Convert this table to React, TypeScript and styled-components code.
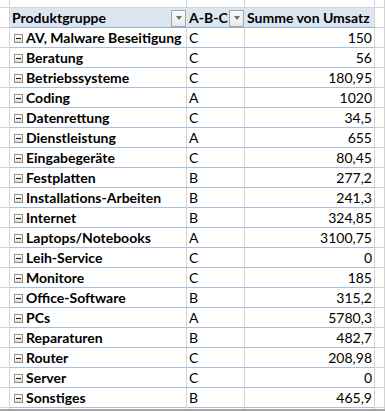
import { Fragment } from "react";
import styled, { createGlobalStyle } from "styled-components";

const GlobalStyle = createGlobalStyle`
    html, body {
        margin: 0;
        padding: 0;
        background: #ffffff;
    }
`;

type Row = { name: string; abc: string; sum: string };

const rows: Row[] = [
    { name: "AV, Malware Beseitigung", abc: "C", sum: "150" },
    { name: "Beratung", abc: "C", sum: "56" },
    { name: "Betriebssysteme", abc: "C", sum: "180,95" },
    { name: "Coding", abc: "A", sum: "1020" },
    { name: "Datenrettung", abc: "C", sum: "34,5" },
    { name: "Dienstleistung", abc: "A", sum: "655" },
    { name: "Eingabegeräte", abc: "C", sum: "80,45" },
    { name: "Festplatten", abc: "B", sum: "277,2" },
    { name: "Installations-Arbeiten", abc: "B", sum: "241,3" },
    { name: "Internet", abc: "B", sum: "324,85" },
    { name: "Laptops/Notebooks", abc: "A", sum: "3100,75" },
    { name: "Leih-Service", abc: "C", sum: "0" },
    { name: "Monitore", abc: "C", sum: "185" },
    { name: "Office-Software", abc: "B", sum: "315,2" },
    { name: "PCs", abc: "A", sum: "5780,3" },
    { name: "Reparaturen", abc: "B", sum: "482,7" },
    { name: "Router", abc: "C", sum: "208,98" },
    { name: "Server", abc: "C", sum: "0" },
    { name: "Sonstiges", abc: "B", sum: "465,9" },
];

const Sheet = styled.div`
    display: grid;
    grid-template-columns: 10px 177px 58px 130px 1fr;
    grid-template-rows: 8px 20px repeat(19, 20px) 1px;
    width: 385px;
    height: 411px;
    box-sizing: border-box;
    border-bottom: 2px solid #a3a3a3;
    background: #ffffff;
    font-family: Lato, "Liberation Sans", sans-serif;
    font-size: 14px;
    color: #000000;
    overflow: hidden;
`;

const GridCell = styled.div<{ $noBottom?: boolean }>`
    box-sizing: border-box;
    border-right: 1px solid #d4d4d4;
    border-bottom: ${p => (p.$noBottom ? "none" : "1px solid #d4d4d4")};
`;

const HeaderCell = styled.div<{ $last?: boolean }>`
    box-sizing: border-box;
    display: flex;
    align-items: center;
    justify-content: space-between;
    padding-left: 2px;
    background: #dce6f1;
    border-bottom: 1px solid #95b3d7;
    border-right: 1px solid ${p => (p.$last ? "#d4d4d4" : "#dce6f1")};
    font-weight: 700;
    white-space: nowrap;
`;

const FilterButton = styled.span`
    box-sizing: border-box;
    width: 15px;
    height: 17px;
    margin-top: 1px;
    display: flex;
    align-items: center;
    justify-content: center;
    border: 1px solid #a5a5a5;
    background: linear-gradient(#fbfbfb, #e9e9e9);

    &::after {
        content: "";
        border-left: 3.5px solid transparent;
        border-right: 3.5px solid transparent;
        border-top: 4px solid #6d6d6d;
    }
`;

const DataCell = styled.div<{ $align?: "left" | "right"; $bold?: boolean }>`
    box-sizing: border-box;
    display: flex;
    align-items: center;
    justify-content: ${p => (p.$align === "right" ? "flex-end" : "flex-start")};
    padding: ${p => (p.$align === "right" ? "0 2px 0 0" : "0 0 0 2px")};
    border-right: 1px solid #d4d4d4;
    border-bottom: 1px solid #a7bfde;
    font-weight: ${p => (p.$bold ? 700 : 400)};
    white-space: nowrap;
    overflow: hidden;
`;

const Collapse = styled.span`
    box-sizing: border-box;
    flex: none;
    width: 9px;
    height: 9px;
    margin: 1px 3px 0 2px;
    display: flex;
    align-items: center;
    justify-content: center;
    border: 1px solid #8e8e8e;
    background: linear-gradient(#ffffff, #dedede);

    &::after {
        content: "";
        width: 5px;
        height: 1px;
        background: #1a1a1a;
    }
`;

export default function App() {

    return <>
        <GlobalStyle />
        <Sheet>
            <GridCell />
            <GridCell />
            <GridCell />
            <GridCell />
            <GridCell />

            <GridCell />
            <HeaderCell>
                Produktgruppe
                <FilterButton />
            </HeaderCell>
            <HeaderCell>
                A-B-C
                <FilterButton />
            </HeaderCell>
            <HeaderCell $last>Summe von Umsatz</HeaderCell>
            <GridCell />

            {rows.map(row => <Fragment key={row.name}>
                <GridCell />
                <DataCell $bold>
                    <Collapse />
                    {row.name}
                </DataCell>
                <DataCell>{row.abc}</DataCell>
                <DataCell $align="right">{row.sum}</DataCell>
                <GridCell />
            </Fragment>)}

            <GridCell $noBottom />
            <GridCell $noBottom />
            <GridCell $noBottom />
            <GridCell $noBottom />
            <GridCell $noBottom />
        </Sheet>
    </>
}
